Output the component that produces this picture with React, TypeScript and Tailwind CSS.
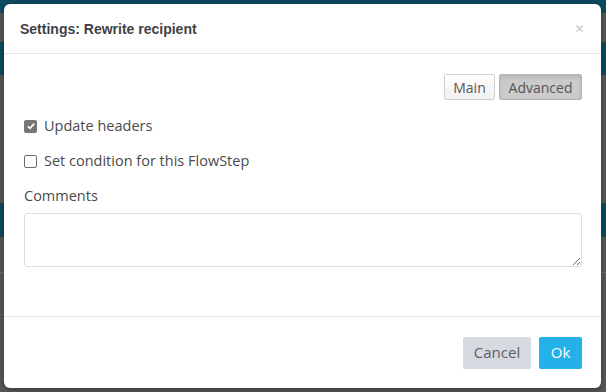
import { X } from 'lucide-react';

const bands = [
  { h: 'h-[13px]', c: 'bg-[#0d4a60]' },
  { h: 'h-[29px]', c: 'bg-[#575757]' },
  { h: 'h-[33px]', c: 'bg-[#0d4a60]' },
  { h: 'h-[128px]', c: 'bg-[#575757]' },
  { h: 'h-[34px]', c: 'bg-[#0d4a60]' },
  { h: 'h-[36px]', c: 'bg-[#575757] border-b border-[#6a6a6a]' },
  { h: 'flex-1', c: 'bg-[#575757]' },
];

function Check({ checked, label }: { checked?: boolean; label: string }) {
  return (
    <label className="flex h-5 items-center gap-[7px]">
      {checked ? (
        <span className="flex h-[13px] w-[13px] items-center justify-center rounded-[2px] bg-[#767676]">
          <svg viewBox="0 0 12 12" className="h-[10px] w-[10px]">
            <path d="M2.2 6.3 4.8 8.8 9.8 3.2" fill="none" stroke="#fff" strokeWidth="2" />
          </svg>
        </span>
      ) : (
        <span className="h-[13px] w-[13px] rounded-[2px] border border-[#6b6b6b] bg-white" />
      )}
      <span className="text-[14.5px] text-[#4a4a4a]">{label}</span>
    </label>
  );
}

export default function App() {
  return (
    <div className="relative h-[392px] w-[606px] overflow-hidden font-['Open_Sans',sans-serif]">
      <div className="flex h-full flex-col">
        {bands.map((b, i) => (
          <div key={i} className={`${b.h} ${b.c}`} />
        ))}
      </div>

      <div className="absolute left-[4px] top-[4px] flex h-[384px] w-[597px] flex-col rounded-[6px] bg-white shadow-[0_2px_6px_rgba(0,0,0,0.35)]">
        <div className="flex h-[50px] items-center justify-between border-b border-[#e5e5e5] pl-4 pr-[16px]">
          <h2 className="pt-[2px] font-['Liberation_Sans',Arial,sans-serif] text-[14px] font-bold text-[#3f4246]">
            Settings: Rewrite recipient
          </h2>
          <X className="h-[11px] w-[11px] text-[#c4c4c4]" strokeWidth={2.5} />
        </div>

        <div className="flex flex-1 flex-col pl-5 pr-[19px] pt-[20px]">
          <div className="flex justify-end gap-[4px]">
            <button className="h-[26px] w-[51px] rounded-[2px] border border-[#cfcfcf] bg-gradient-to-b from-white to-[#f1f1f1] text-[14px] text-[#555]">
              Main
            </button>
            <button className="h-[26px] w-[83px] rounded-[2px] border border-[#b4b4b4] bg-[#cbcbcb] text-[14px] text-[#555] shadow-[inset_0_2px_4px_rgba(0,0,0,0.12)]">
              Advanced
            </button>
          </div>

          <div className="mt-[16px] flex flex-col gap-[15px]">
            <Check checked label="Update headers" />
            <Check label="Set condition for this FlowStep" />
          </div>

          <div className="mt-[15px] h-5 text-[14.5px] leading-5 text-[#4a4a4a]">Comments</div>
          <textarea className="mt-[7px] h-[54px] w-full rounded-[3px] border border-[#dedede] px-2 py-1 text-[14px] outline-none" />
        </div>

        <div className="flex h-[72px] items-center justify-end gap-[8px] border-t border-[#e5e5e5] pl-[17px] pr-[19px]">
          <button className="h-[32px] w-[68px] rounded-[2px] bg-[#d6d9e0] text-[15px] text-[#5a5f66]">
            Cancel
          </button>
          <button className="h-[32px] w-[43px] rounded-[2px] bg-[#24b0e8] text-[15px] text-white">
            Ok
          </button>
        </div>
      </div>
    </div>
  );
}
